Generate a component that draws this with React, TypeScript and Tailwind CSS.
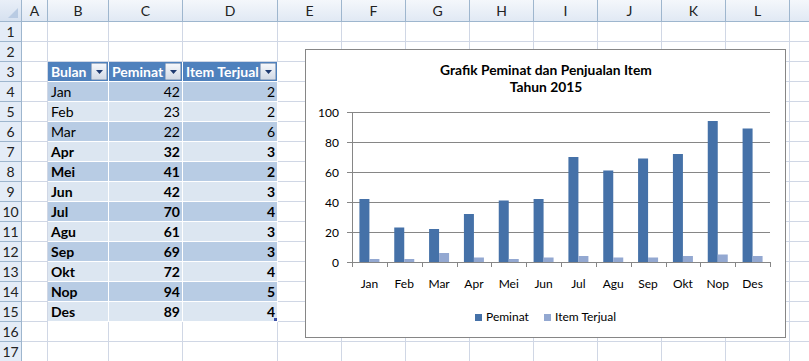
import React from "react";

const LETTERS = ["A", "B", "C", "D", "E", "F", "G", "H", "I", "J", "K", "L", ""];
const WIDTHS = [
  "w-[26px]",
  "w-[61px]",
  "w-[74px]",
  "w-[95px]",
  "w-[64px]",
  "w-[64px]",
  "w-[64px]",
  "w-[64px]",
  "w-[64px]",
  "w-[64px]",
  "w-[64px]",
  "w-[64px]",
  "w-[64px]",
];

const DATA = [
  { bulan: "Jan", peminat: 42, item: 2 },
  { bulan: "Feb", peminat: 23, item: 2 },
  { bulan: "Mar", peminat: 22, item: 6 },
  { bulan: "Apr", peminat: 32, item: 3 },
  { bulan: "Mei", peminat: 41, item: 2 },
  { bulan: "Jun", peminat: 42, item: 3 },
  { bulan: "Jul", peminat: 70, item: 4 },
  { bulan: "Agu", peminat: 61, item: 3 },
  { bulan: "Sep", peminat: 69, item: 3 },
  { bulan: "Okt", peminat: 72, item: 4 },
  { bulan: "Nop", peminat: 94, item: 5 },
  { bulan: "Des", peminat: 89, item: 4 },
];

const HEADERS = ["Bulan", "Peminat", "Item Terjual"];

function FilterButton() {
  return (
    <div className="w-[16px] h-[17px] shrink-0 mr-[1px] flex items-center justify-center border border-[#a3b3ca] rounded-[1px] bg-gradient-to-b from-[#f5f7fb] to-[#d3dae6]">
      <svg width="7" height="4" viewBox="0 0 7 4">
        <path d="M0 0 L7 0 L3.5 4 Z" fill="#1f3a70" />
      </svg>
    </div>
  );
}

function Cell({ row, col }: { row: number; col: number }) {
  const w = WIDTHS[col];
  // table lives in B..D (col 1..3), rows 3..15
  if (col >= 1 && col <= 3 && row === 3) {
    return (
      <div
        className={`${w} h-full shrink-0 flex items-center justify-between pl-[3px] bg-[#4f81bd] border-r border-b border-white overflow-hidden`}
      >
        <span className="text-white font-bold whitespace-nowrap">{HEADERS[col - 1]}</span>
        <FilterButton />
      </div>
    );
  }
  if (col >= 1 && col <= 3 && row >= 4 && row <= 15) {
    const i = row - 4;
    const d = DATA[i];
    const band = i % 2 === 0 ? "bg-[#b8cce4]" : "bg-[#dce6f1]";
    const weight = i >= 3 ? "font-bold" : "font-normal";
    const value = col === 1 ? d.bulan : col === 2 ? d.peminat : d.item;
    return (
      <div
        className={`${w} ${band} ${weight} h-full shrink-0 relative flex items-center border-r border-b border-white text-black ${
          col === 1 ? "justify-start pl-[3px]" : "justify-end pr-[2px]"
        }`}
      >
        {value}
        {row === 15 && col === 3 && (
          <span className="absolute right-[0px] bottom-[0px] w-[3px] h-[3px] bg-[#3a4fa8]" />
        )}
      </div>
    );
  }
  return <div className={`${w} h-full shrink-0 border-r border-b border-[#d0d7e5]`} />;
}

function Chart() {
  const left = 46;
  const right = 464;
  const zeroY = 212;
  const cw = (right - left) / 12;
  const ticks = [0, 20, 40, 60, 80, 100];
  return (
    <div className="absolute left-[305px] top-[49px] w-[481px] h-[289px] border border-[#868686] bg-white">
      <svg width="479" height="287" viewBox="0 0 479 287" className="block">
        <text x="240" y="25" textAnchor="middle" fontSize="13.8" fontWeight="700" fill="#000">
          Grafik Peminat dan Penjualan Item
        </text>
        <text x="240" y="42" textAnchor="middle" fontSize="13.8" fontWeight="700" fill="#000">
          Tahun 2015
        </text>

        {ticks.map((t) => {
          const y = zeroY - t * 1.5 + 0.5;
          return (
            <g key={t}>
              <line x1={left - 5} x2={right} y1={y} y2={y} stroke="#868686" strokeWidth="1" />
              <text x="33" y={y + 4} textAnchor="end" fontSize="12" fill="#000">
                {t}
              </text>
            </g>
          );
        })}

        {DATA.map((d, i) => {
          const x0 = left + i * cw + (cw - 20) / 2;
          return (
            <g key={d.bulan}>
              <rect x={x0} y={zeroY - d.peminat * 1.5} width="10" height={d.peminat * 1.5} fill="#4571a8" />
              <rect x={x0 + 10} y={zeroY - d.item * 1.5} width="10" height={d.item * 1.5} fill="#93a8d1" />
              <text x={left + (i + 0.5) * cw} y="238" textAnchor="middle" fontSize="12" fill="#000">
                {d.bulan}
              </text>
            </g>
          );
        })}

        <line x1={left + 0.5} x2={left + 0.5} y1={zeroY - 150} y2={zeroY + 5} stroke="#868686" />
        <line x1={left} x2={right} y1={zeroY + 0.5} y2={zeroY + 0.5} stroke="#868686" />
        {Array.from({ length: 13 }).map((_, i) => {
          const x = Math.round(left + i * cw) + 0.5;
          return <line key={i} x1={x} x2={x} y1={zeroY} y2={zeroY + 5} stroke="#868686" />;
        })}

        <rect x="169" y="264" width="7" height="7" fill="#4571a8" />
        <text x="180" y="271" fontSize="12" fill="#000">
          Peminat
        </text>
        <rect x="238" y="264" width="7" height="7" fill="#93a8d1" />
        <text x="249" y="271" fontSize="12" fill="#000">
          Item Terjual
        </text>
      </svg>
    </div>
  );
}

export default function App() {
  const rows = Array.from({ length: 17 }, (_, i) => i + 1);
  return (
    <div className="relative w-[809px] h-[361px] overflow-hidden bg-white text-[14px] leading-none font-['Lato','Liberation_Sans',sans-serif]">
      {/* column headers */}
      <div className="flex h-[22px]">
        <div className="w-[22px] h-full shrink-0 relative border-r border-b border-[#9eb6ce] bg-gradient-to-b from-[#e9eff8] to-[#d6e1f0]">
          <svg className="absolute right-[3px] bottom-[3px]" width="10" height="10" viewBox="0 0 10 10">
            <path d="M10 0 L10 10 L0 10 Z" fill="#b9cbe3" />
          </svg>
        </div>
        {LETTERS.map((l, c) => (
          <div
            key={c}
            className={`${WIDTHS[c]} h-full shrink-0 flex items-center justify-center border-r border-b border-[#9eb6ce] bg-gradient-to-b from-[#f4f7fb] to-[#e1e9f4] text-[#222]`}
          >
            {l}
          </div>
        ))}
      </div>

      {rows.map((r) => (
        <div key={r} className="flex h-[20px]">
          <div className="w-[22px] h-full shrink-0 flex items-center justify-center border-r border-b border-[#9eb6ce] bg-[#e4ecf7] text-[#222]">
            {r}
          </div>
          {LETTERS.map((_, c) => (
            <Cell key={c} row={r} col={c} />
          ))}
        </div>
      ))}

      <Chart />
    </div>
  );
}
